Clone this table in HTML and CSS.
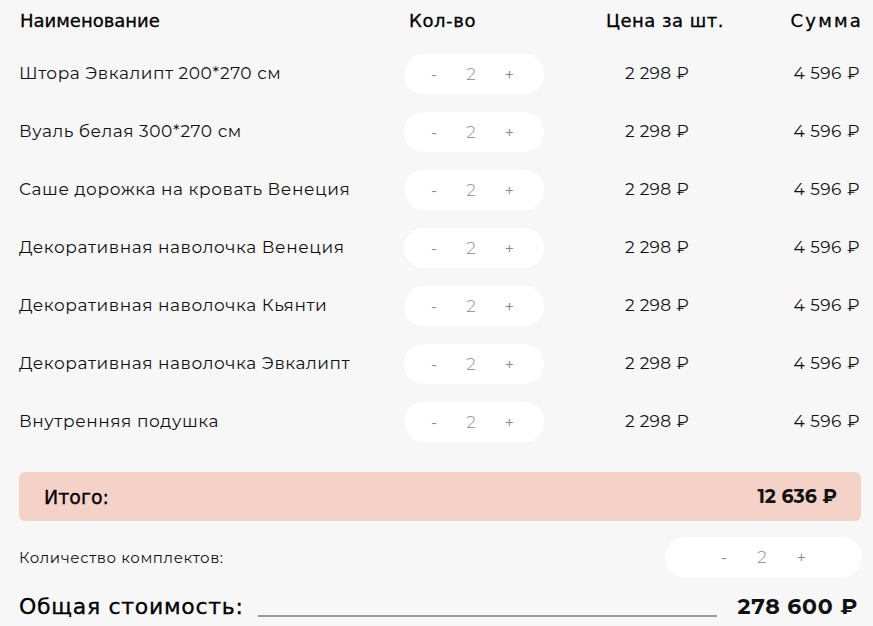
FILE: index.html
```html
<!DOCTYPE html>
<html lang="ru">
<head>
<meta charset="utf-8">
<link rel="stylesheet" href="styles.css">
</head>
<body>
<div class="cart">
  <div class="table">
    <div class="row head">
      <div class="c-name">Наименование</div>
      <div class="c-qty">Кол-во</div>
      <div class="c-price">Цена за шт.</div>
      <div class="c-sum">Сумма</div>
    </div>
    <div class="row item">
      <div class="c-name">Штора Эвкалипт 200*270 см</div>
      <div class="c-qty"><div class="stepper"><span>-</span><span class="num">2</span><span>+</span></div></div>
      <div class="c-price">2 298 ₽</div>
      <div class="c-sum">4 596 ₽</div>
    </div>
    <div class="row item">
      <div class="c-name">Вуаль белая 300*270 см</div>
      <div class="c-qty"><div class="stepper"><span>-</span><span class="num">2</span><span>+</span></div></div>
      <div class="c-price">2 298 ₽</div>
      <div class="c-sum">4 596 ₽</div>
    </div>
    <div class="row item">
      <div class="c-name">Саше дорожка на кровать Венеция</div>
      <div class="c-qty"><div class="stepper"><span>-</span><span class="num">2</span><span>+</span></div></div>
      <div class="c-price">2 298 ₽</div>
      <div class="c-sum">4 596 ₽</div>
    </div>
    <div class="row item">
      <div class="c-name">Декоративная наволочка Венеция</div>
      <div class="c-qty"><div class="stepper"><span>-</span><span class="num">2</span><span>+</span></div></div>
      <div class="c-price">2 298 ₽</div>
      <div class="c-sum">4 596 ₽</div>
    </div>
    <div class="row item">
      <div class="c-name">Декоративная наволочка Кьянти</div>
      <div class="c-qty"><div class="stepper"><span>-</span><span class="num">2</span><span>+</span></div></div>
      <div class="c-price">2 298 ₽</div>
      <div class="c-sum">4 596 ₽</div>
    </div>
    <div class="row item">
      <div class="c-name">Декоративная наволочка Эвкалипт</div>
      <div class="c-qty"><div class="stepper"><span>-</span><span class="num">2</span><span>+</span></div></div>
      <div class="c-price">2 298 ₽</div>
      <div class="c-sum">4 596 ₽</div>
    </div>
    <div class="row item">
      <div class="c-name">Внутренняя подушка</div>
      <div class="c-qty"><div class="stepper"><span>-</span><span class="num">2</span><span>+</span></div></div>
      <div class="c-price">2 298 ₽</div>
      <div class="c-sum">4 596 ₽</div>
    </div>
  </div>
  <div class="subtotal">
    <span class="sub-label">Итого:</span>
    <span class="sub-value">12 636 ₽</span>
  </div>
  <div class="sets">
    <span class="sets-label">Количество комплектов:</span>
    <div class="stepper wide"><span>-</span><span class="num">2</span><span>+</span></div>
  </div>
  <div class="total">
    <span class="total-label">Общая стоимость:</span>
    <span class="total-line"></span>
    <span class="total-value">278 600 ₽</span>
  </div>
</div>
</body>
</html>
```
FILE: styles.css
```css
html, body {
  margin: 0;
  padding: 0;
  background: #f7f7f7;
}
body {
  font-family: "Montserrat", "Open Sans", "DejaVu Sans", sans-serif;
  color: #111;
}
.cart {
  padding: 0 12px 0 19px;
}
.row {
  display: grid;
  grid-template-columns: 385px 140px 232px 85px;
  align-items: center;
}
.head {
  height: 40px;
  margin-bottom: 4px;
  font-family: "DejaVu Sans", sans-serif;
  font-size: 18px;
  color: #000;
  -webkit-text-stroke: 0.3px #000;
}
.head .c-name { padding-left: 1px; }
.head .c-qty { padding-left: 5px; letter-spacing: 0.6px; }
.head .c-price { letter-spacing: 0.5px; padding-left: 10px; }
.head .c-sum { letter-spacing: 2.2px; margin-right: -2px; }
.item {
  height: 58px;
  font-size: 17px;
  letter-spacing: 0.55px;
}
.c-price { text-align: center; }
.item .c-price { letter-spacing: 0.3px; padding-right: 6px; }
.item .c-sum { letter-spacing: 0.5px; margin-right: 1px; }
.c-sum { text-align: right; white-space: nowrap; }
.stepper {
  display: flex;
  align-items: center;
  justify-content: center;
  gap: 29px;
  width: 140px;
  height: 40px;
  border-radius: 20px;
  background: #fff;
  color: #8a8a8a;
  font-size: 16px;
  letter-spacing: 0;
  margin-top: 2px;
  padding-right: 3px;
  box-sizing: border-box;
}
.stepper .num {
  font-size: 17px;
  font-weight: 300;
}
.subtotal {
  margin-top: 22px;
  height: 49px;
  border-radius: 6px;
  background: #f4d2c7;
  display: flex;
  align-items: center;
  justify-content: space-between;
  padding: 0 24px 0 25px;
  font-weight: 700;
  font-size: 19px;
}
.sub-label {
  font-family: "DejaVu Sans", sans-serif;
  font-weight: 400;
  -webkit-text-stroke: 0.3px #000;
  color: #000;
}
.sets {
  display: flex;
  align-items: center;
  justify-content: space-between;
  margin-top: 16px;
  height: 40px;
}
.sets-label {
  font-size: 15px;
  letter-spacing: 0.6px;
}
.stepper.wide {
  width: 197px;
  margin-right: -1px;
  margin-top: 0;
  gap: 30px;
  padding-right: 0;
}
.total {
  display: flex;
  align-items: center;
  margin-top: 11px;
  height: 36px;
}
.total-label {
  font-family: "DejaVu Sans", sans-serif;
  font-size: 22px;
  letter-spacing: 0.7px;
  color: #000;
  -webkit-text-stroke: 0.3px #000;
}
.total-line {
  flex: 1;
  height: 2px;
  background: #9a9a9a;
  margin: 20px 21px 0 14px;
  align-self: center;
}
.total-value {
  font-size: 22px;
  font-weight: 700;
  letter-spacing: 0.7px;
  margin-right: 3px;
}
```
